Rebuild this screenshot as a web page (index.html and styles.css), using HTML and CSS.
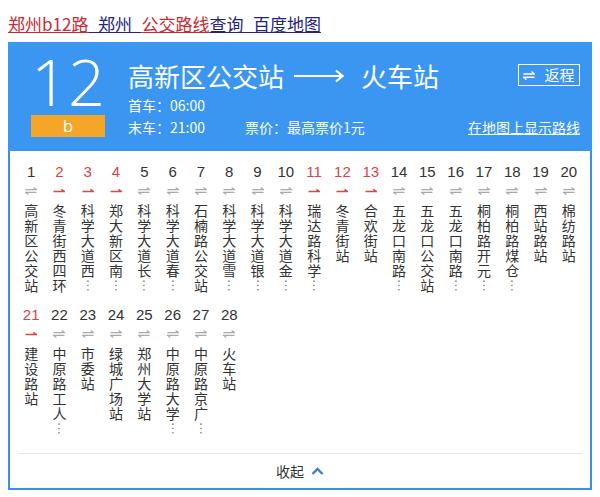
FILE: index.html
```html
<!DOCTYPE html>
<html lang="zh-CN">
<head>
<meta charset="utf-8">
<title>郑州b12路</title>
<link rel="stylesheet" href="styles.css">
</head>
<body>
<div class="title"><span class="lk red">郑州b12路</span><span class="lk navy">_郑州_</span><span class="lk red">公交路线</span><span class="lk navy">查询_百度地图</span></div>
<div class="panel">
  <div class="head">
    <div class="badge">
      <div class="num">12</div>
      <div class="sub">b</div>
    </div>
    <div class="info">
      <div class="route">高新区公交站<svg class="bigarrow" width="50" height="14" viewBox="0 0 50 14"><path d="M0 7H48M42 1.5L48.5 7L42 12.5" fill="none" stroke="#fff" stroke-width="2.2"/></svg>火车站</div>
      <div class="time">首车：06:00</div>
      <div class="time"><span class="last">末车：21:00</span><span>票价：最高票价1元</span></div>
    </div>
    <div class="actions">
      <div class="back"><svg width="12" height="9" viewBox="0 0 12 9"><path d="M0.5 3H11.5L8.5 0.5M11.5 6.3H0.5L3.5 8.6" fill="none" stroke="#fff" stroke-width="1.4"/></svg><span>返程</span></div>
      <span class="maplink">在地图上显示路线</span>
    </div>
  </div>
  <div class="body">
    <div class="stops" id="stops"></div>
  </div>
  <div class="foot"><span class="fold">收起</span><svg width="13" height="8" viewBox="0 0 13 8"><path d="M1.5 7L6.5 2L11.5 7" fill="none" stroke="#3a7fd6" stroke-width="2.4"/></svg></div>
</div>
<script src="app.js"></script>
</body>
</html>
```
FILE: app.js
```js
var stops = [
  ["高新区公交站", 0, 0], ["冬青街西四环", 1, 0], ["科学大道西", 1, 1], ["郑大新区南", 1, 1],
  ["科学大道长", 0, 1], ["科学大道春", 0, 1], ["石楠路公交站", 0, 0], ["科学大道雪", 0, 1],
  ["科学大道银", 0, 1], ["科学大道金", 0, 1], ["瑞达路科学", 1, 1], ["冬青街站", 1, 0],
  ["合欢街站", 1, 0], ["五龙口南路", 0, 1], ["五龙口公交站", 0, 0], ["五龙口南路", 0, 1],
  ["桐柏路开元", 0, 1], ["桐柏路煤仓", 0, 1], ["西站路站", 0, 0], ["棉纺路站", 0, 0],
  ["建设路站", 1, 0], ["中原路工人", 0, 1], ["市委站", 0, 0], ["绿城广场站", 0, 0],
  ["郑州大学站", 0, 0], ["中原路大学", 0, 1], ["中原路京广", 0, 1], ["火车站", 0, 0]
];
var grayArrow = '<svg class="arr" width="12" height="8" viewBox="0 0 12 8"><path d="M0.5 2.6H11.5L8.6 0.6M11.5 5.4H0.5L3.4 7.4" fill="none" stroke="#a9a9a9" stroke-width="1.2"/></svg>';
var redArrow = '<svg class="arr" width="12" height="8" viewBox="0 0 12 8"><path d="M0.5 4.6H11.5L8.4 2.4" fill="none" stroke="#e0454b" stroke-width="1.5"/></svg>';
var html = "";
for (var i = 0; i < stops.length; i++) {
  var s = stops[i];
  html += '<div class="stop' + (s[1] ? ' one' : '') + '">' +
    '<div class="no">' + (i + 1) + '</div>' +
    (s[1] ? redArrow : grayArrow) +
    '<div class="name">' + s[0] + (s[2] ? '<span class="more">…</span>' : '') + '</div>' +
    '</div>';
}
document.getElementById("stops").innerHTML = html;
```
FILE: styles.css
```css
body {
  margin: 0 8px;
  font-family: "Noto Sans CJK SC", "Noto Sans", sans-serif;
  background: #fff;
}
.title {
  height: 42px;
  line-height: 48px;
  font-size: 17px;
  white-space: nowrap;
}
.lk { text-decoration: underline; }
.red { color: #c92a30; }
.navy { color: #24247e; }

.panel { width: 584px; }
.head {
  display: flex;
  height: 109px;
  background: #3a96f0;
  color: #fff;
  padding: 0 12px 0 23px;
  box-sizing: border-box;
}
.badge { width: 74px; padding-top: 8px; }
.num {
  font-family: "Open Sans", sans-serif;
  font-weight: 300;
  font-size: 65px;
  line-height: 62px;
  height: 64px;
  text-align: center;
}
.sub {
  margin-top: 1px;
  height: 22px;
  line-height: 22px;
  background: #f5a627;
  text-align: center;
  font-family: "Open Sans", sans-serif;
  font-size: 17px;
}
.info { margin-left: 23px; padding-top: 17px; }
.route {
  font-size: 26px;
  line-height: 34px;
  display: flex;
  align-items: center;
  white-space: nowrap;
}
.bigarrow { margin: 0 17px 0 10px; }
.time {
  font-size: 14px;
  line-height: 22px;
  white-space: nowrap;
}
.route + .time { margin-top: 1px; }
.last { display: inline-block; width: 117px; }
.actions {
  margin-left: auto;
  display: flex;
  flex-direction: column;
  align-items: flex-end;
  padding-top: 22px;
}
.back {
  width: 62px;
  height: 22px;
  box-sizing: border-box;
  border: 1px solid #fff;
  display: flex;
  align-items: center;
  justify-content: center;
  gap: 9px;
  font-size: 15px;
  line-height: 20px;
}
.maplink {
  margin-top: 32px;
  font-size: 14px;
  line-height: 18px;
  text-decoration: underline;
  white-space: nowrap;
}

.body {
  border-left: 2px solid #3d8fe0;
  border-right: 2px solid #3d8fe0;
  padding: 13px 7px 17px;
}
.stops {
  display: grid;
  grid-template-columns: repeat(20, 1fr);
  row-gap: 14px;
}
.stop {
  display: flex;
  flex-direction: column;
  align-items: center;
  color: #333;
}
.no {
  font-family: "Liberation Sans", sans-serif;
  font-size: 15px;
  line-height: 16px;
  height: 16px;
}
.one .no { color: #d9434a; }
.arr { margin-top: 7px; display: block; }
.name {
  margin-top: 8px;
  width: 14px;
  height: 90px;
  font-size: 14px;
  line-height: 15px;
  word-break: break-all;
}
.more {
  display: block;
  height: 15px;
  line-height: 15px;
  color: #888;
  font-size: 13px;
  text-align: center;
  transform: rotate(90deg);
}
.foot {
  border: 2px solid #3d8fe0;
  border-top: 0;
  height: 35px;
  display: flex;
  align-items: center;
  justify-content: center;
  gap: 7px;
  position: relative;
}
.foot::before {
  content: "";
  position: absolute;
  top: 0;
  left: 8px;
  right: 8px;
  height: 1px;
  background: #e8e8e8;
}
.fold {
  font-size: 14px;
  color: #333;
  line-height: 34px;
}
```
